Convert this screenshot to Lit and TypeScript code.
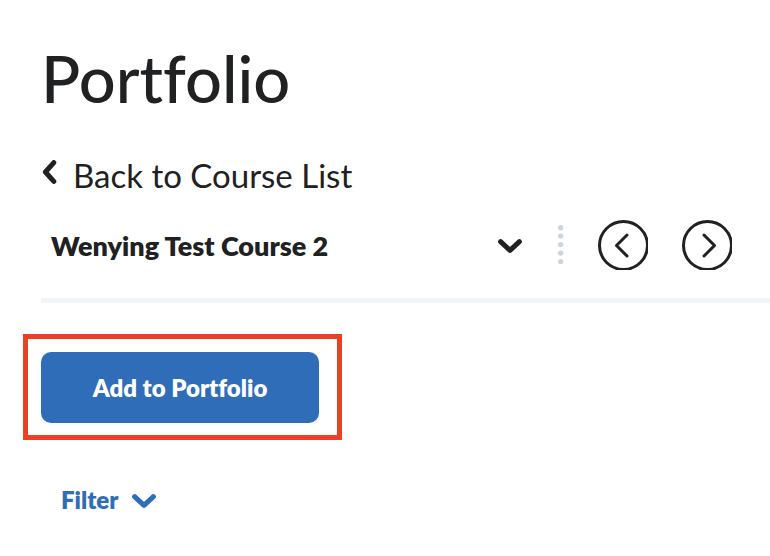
import { LitElement, html, css } from "lit";
import { customElement } from "lit/decorators.js";

@customElement("app-root")
export class AppRoot extends LitElement {
  static styles = css`
    :host {
      display: block;
      box-sizing: border-box;
      padding: 38px 0 40px 41px;
      background: #fff;
      color: #202122;
      font-family: "Lato", "Liberation Sans", sans-serif;
      font-variant-ligatures: none;
    }
    svg {
      display: block;
      flex: none;
      fill: none;
      stroke: currentColor;
      stroke-linecap: round;
      stroke-linejoin: round;
    }
    button,
    select {
      margin: 0;
      border: 0;
      padding: 0;
      background: none;
      color: inherit;
      font: inherit;
      font-variant-ligatures: none;
      cursor: pointer;
    }
    .title {
      margin: 0;
      font-size: 65px;
      line-height: 80px;
      font-weight: 500;
    }
    .back {
      display: flex;
      width: fit-content;
      margin-top: 36px;
      gap: 16px;
      color: inherit;
      font-size: 33px;
      line-height: 42px;
      text-decoration: none;
    }
    .back svg {
      margin-top: 6px;
    }
    .bar {
      display: flex;
      align-items: center;
      margin-top: 24px;
      padding: 0 38px 28px 0;
      border-bottom: 5px solid #f1f5fa;
    }
    .course {
      display: grid;
      flex: 1;
      align-items: center;
    }
    .course select {
      grid-area: 1 / 1;
      appearance: none;
      min-width: 0;
      height: 50px;
      padding: 0 56px 0 10px;
      font-size: 27px;
      font-weight: 800;
    }
    .course svg {
      grid-area: 1 / 1;
      justify-self: end;
      margin-top: 2px;
      pointer-events: none;
    }
    .dots {
      margin: 0 34px 0 36px;
      stroke: #cdd5dc;
    }
    .step + .step {
      margin-left: 34px;
    }
    .frame {
      width: fit-content;
      margin: 31px 0 0 -18px;
      border: 5px solid #eb4026;
      padding: 13px 18px 12px 13px;
    }
    .add {
      display: block;
      height: 71px;
      width: 278px;
      border-radius: 10px;
      background: #2f6db8;
      color: #fff;
      font-size: 24px;
      font-weight: 800;
    }
    .filter {
      display: flex;
      align-items: center;
      gap: 14px;
      margin: 44px 0 0 20px;
      color: #2f6db8;
      font-size: 24px;
      line-height: 32px;
      font-weight: 800;
    }
    .filter svg {
      margin-top: 2px;
    }
  `;

  private chevronDown() {
    return html`<svg width="24" height="16" viewBox="0 0 24 16" stroke-width="5" aria-hidden="true">
      <path d="M2.6 3.6 12 12.4 21.4 3.6" />
    </svg>`;
  }

  render() {
    return html`
      <h1 class="title">Portfolio</h1>
      <a class="back" href="#courses">
        <svg width="16" height="24" viewBox="0 0 16 24" stroke-width="5" aria-hidden="true">
          <path d="M12.8 2.6 4.4 12 12.8 21.4" />
        </svg>
        Back to Course List
      </a>
      <div class="bar">
        <label class="course">
          <select aria-label="Course">
            <option>Wenying Test Course 2</option>
          </select>
          ${this.chevronDown()}
        </label>
        <svg class="dots" width="6" height="40" viewBox="0 0 6 40" stroke-width="5.4" aria-hidden="true">
          <path d="M2.7 2.7h.01M2.7 11.1h.01M2.7 19.6h.01M2.7 28.1h.01M2.7 36.6h.01" />
        </svg>
        <button class="step" aria-label="Previous course">
          <svg width="50" height="50" viewBox="0 0 50 50" stroke-width="3" aria-hidden="true">
            <circle cx="25.5" cy="25.5" r="24" />
            <path d="M29 15 18.5 25.5 29 36" />
          </svg>
        </button>
        <button class="step" aria-label="Next course">
          <svg width="50" height="50" viewBox="0 0 50 50" stroke-width="3" aria-hidden="true">
            <circle cx="25.5" cy="25.5" r="24" />
            <path d="M22 15 32.5 25.5 22 36" />
          </svg>
        </button>
      </div>
      <div class="frame">
        <button class="add">Add to Portfolio</button>
      </div>
      <button class="filter">Filter ${this.chevronDown()}</button>
    `;
  }
}
